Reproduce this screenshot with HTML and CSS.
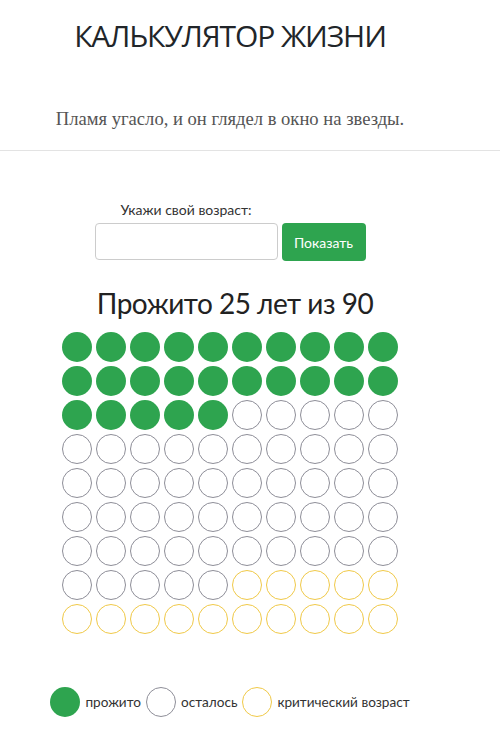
FILE: index.html
```html
<!DOCTYPE html>
<html lang="ru">
<head>
<meta charset="utf-8">
<title>Калькулятор жизни</title>
<link rel="stylesheet" href="styles.css">
</head>
<body>
<header class="top">
  <h1 class="title">КАЛЬКУЛЯТОР ЖИЗНИ</h1>
  <p class="quote">Пламя угасло, и он глядел в окно на звезды.</p>
</header>
<hr class="rule">
<main class="calc">
  <form class="age-form">
    <div class="field">
      <label class="label" for="age">Укажи свой возраст:</label>
      <input class="input" id="age" type="text">
    </div>
    <button class="btn" type="button">Показать</button>
  </form>
  <h2 class="result">Прожито 25 лет из 90</h2>
  <div class="grid" id="grid"></div>
  <div class="legend">
    <span class="dot lived"></span><span class="legend-text">прожито</span>
    <span class="dot left"></span><span class="legend-text">осталось</span>
    <span class="dot crit"></span><span class="legend-text">критический возраст</span>
  </div>
</main>
<script src="script.js"></script>
</body>
</html>
```
FILE: styles.css
```css
* { box-sizing: border-box; }
body {
  margin: 0;
  background: #fff;
  font-family: Lato, "Open Sans", sans-serif;
  color: #333;
}
.top {
  width: 460px;
  padding-top: 14px;
  text-align: center;
}
.title {
  margin: 0;
  font-family: "Open Sans", sans-serif;
  font-weight: 400;
  font-size: 30px;
  line-height: 44px;
  color: #212529;
  letter-spacing: -1.1px;
}
.quote {
  margin: 49px 0 0;
  font-family: "Liberation Serif", serif;
  font-size: 18.6px;
  line-height: 24px;
  color: #555;
}
.rule {
  margin: 19px 0 0;
  border: 0;
  border-top: 1px solid #e3e3e3;
  height: 0;
}
.calc {
  width: 460px;
  padding-top: 50px;
  display: flex;
  flex-direction: column;
  align-items: center;
}
.age-form {
  display: flex;
  align-items: flex-end;
  gap: 4px;
}
.field {
  display: flex;
  flex-direction: column;
  align-items: center;
}
.label {
  font-size: 14px;
  line-height: 18px;
  margin-bottom: 4px;
  color: #333;
}
.input {
  width: 183px;
  height: 37px;
  border: 1px solid #ccc;
  border-radius: 4px;
  margin-bottom: 1px;
}
.btn {
  width: 84px;
  height: 38px;
  border: 0;
  border-radius: 4px;
  background: #2ea44f;
  color: #fff;
  font-family: Lato, sans-serif;
  font-size: 14px;
}
.result {
  margin: 24px 0 0;
  padding-left: 10px;
  font-weight: 400;
  font-size: 28px;
  line-height: 36px;
  letter-spacing: -0.5px;
  color: #222;
}
.grid {
  margin-top: 11px;
  display: grid;
  grid-template-columns: repeat(10, 30px);
  gap: 4px;
}
.dot {
  width: 30px;
  height: 30px;
  border-radius: 50%;
  display: block;
}
.lived { background: #2ea44f; }
.left { border: 1px solid #8e8e98; }
.crit { border: 1px solid #f0c948; }
.legend {
  margin-top: 53px;
  display: flex;
  align-items: center;
  gap: 5px;
}
.legend-text {
  font-size: 13.6px;
  color: #333;
}
```
FILE: script.js
```js
var grid = document.getElementById('grid');
for (var i = 0; i < 90; i++) {
  var d = document.createElement('span');
  d.className = 'dot ' + (i < 25 ? 'lived' : (i < 75 ? 'left' : 'crit'));
  grid.appendChild(d);
}
```
